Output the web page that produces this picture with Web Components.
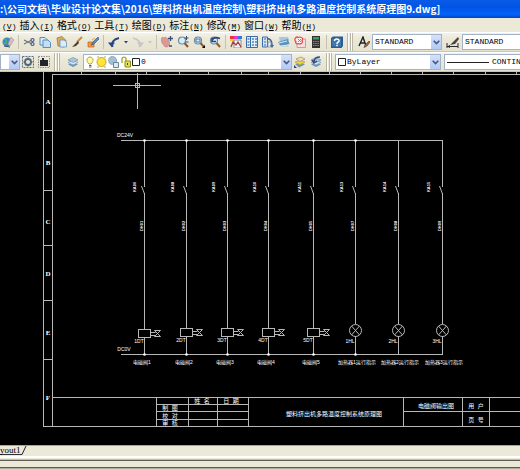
<!DOCTYPE html>
<html lang="zh-CN">
<head>
  <meta charset="UTF-8">
  <meta name="viewport" content="width=device-width, initial-scale=1.0">
  <title>原理图9.dwg</title>
  <style>
    html, body {
      height: 100%;
      margin: 0;
    }
    body {
      overflow: hidden;
      background: #ece9d8;
      font-family: "Liberation Mono", "Noto Sans CJK SC", monospace;
    }
  </style>
</head>
<body>
  <cad-window>
    <cad-title slot="title">:\公司文档\毕业设计论文集\2016\塑料挤出机温度控制\塑料挤出机多路温度控制系统原理图9.dwg]</cad-title>
    <cad-menu slot="menu"></cad-menu>

    <cad-toolbar slot="tools">
      <cad-tool icon="globe" label="发布"></cad-tool>
      <cad-sep></cad-sep>
      <cad-tool icon="cut" label="剪切"></cad-tool>
      <cad-tool icon="copy" label="复制"></cad-tool>
      <cad-tool icon="paste" label="粘贴"></cad-tool>
      <cad-tool icon="brush" label="特性匹配"></cad-tool>
      <cad-tool icon="block" label="块编辑器"></cad-tool>
      <cad-sep></cad-sep>
      <cad-tool icon="undo" label="放弃"></cad-tool>
      <cad-tool icon="caret" label="放弃列表" narrow></cad-tool>
      <cad-tool icon="redo" label="重做"></cad-tool>
      <cad-tool icon="caretOff" label="重做列表" narrow></cad-tool>
      <cad-sep></cad-sep>
      <cad-tool icon="pan" label="实时平移"></cad-tool>
      <cad-tool icon="zoom" label="实时缩放"></cad-tool>
      <cad-tool icon="zoomWin" label="窗口缩放"></cad-tool>
      <cad-tool icon="zoomPrev" label="缩放上一个"></cad-tool>
      <cad-sep></cad-sep>
      <cad-tool icon="props" label="特性"></cad-tool>
      <cad-tool icon="center" label="设计中心"></cad-tool>
      <cad-tool icon="palette" label="工具选项板"></cad-tool>
      <cad-tool icon="sheets" label="图纸集管理器"></cad-tool>
      <cad-tool icon="markup" label="标记集管理器"></cad-tool>
      <cad-tool icon="calc" label="快速计算器"></cad-tool>
      <cad-sep></cad-sep>
      <cad-tool icon="help" label="帮助"></cad-tool>
      <cad-grip></cad-grip>
      <cad-tool icon="textStyle" label="文字样式"></cad-tool>
      <cad-combo label="文字样式" value="STANDARD" style="width: 70px"></cad-combo>
      <cad-tool icon="dimStyle" label="标注样式" wide></cad-tool>
      <cad-combo label="标注样式" value="STANDARD" style="width: 70px"></cad-combo>
    </cad-toolbar>

    <cad-toolbar slot="tools">
      <cad-combo label="工作空间" value="" style="width: 20px"></cad-combo>
      <cad-tool icon="gear" label="工作空间设置"></cad-tool>
      <cad-tool icon="myspace" label="我的工作空间"></cad-tool>
      <cad-grip></cad-grip>
      <cad-tool icon="layers" label="图层特性管理器" wide></cad-tool>
      <cad-combo label="图层" value="0" icons="bulb sun vpSun lock swatch" style="width: 209px"></cad-combo>
      <cad-tool icon="layerCur" label="置为当前图层"></cad-tool>
      <cad-tool icon="layerPrev" label="上一个图层"></cad-tool>
      <cad-grip></cad-grip>
      <cad-combo label="颜色" value="ByLayer" icons="swatch" style="width: 106px"></cad-combo>
      <cad-combo label="线型" value="CONTINUOUS" icons="rule" style="width: 120px; margin-left: 3px"></cad-combo>
    </cad-toolbar>

    <cad-drawing></cad-drawing>
    <cad-tabs slot="bottom">yout1</cad-tabs>
  </cad-window>

  <script>
    (function() {
      const svg = (body, w = 12, h = 12) =>
        `<svg width="${w}" height="${h}" viewBox="0 0 ${w} ${h}" fill="none" aria-hidden="true">${body}</svg>`;

      const stack = `<path d="M1 8.500l5-2 5 2-5 2.500z" fill="#6f95b8"/><path d="M1 6.500l5-2.500 5 2.500-5 2.500z" fill="#dbe9f4" stroke="#6f95b8" stroke-width=".7"/><path d="M1 4l5-2.500L11 4 6 6.500z" fill="#a9c6df" stroke="#6f95b8" stroke-width=".7"/>`;
      const lens = `<circle cx="5" cy="4.500" r="3.500" fill="#d8ecf6" stroke="#6f8ba4" stroke-width="1.200"/><path d="M7.500 7l3.500 4" stroke="#8a5a35" stroke-width="2"/>`;

      const icons = {
        globe: svg(`<circle cx="5" cy="6" r="4.500" fill="#3f86c4"/><path d="M2 3c2 0 3 2 2 4l-2 1" stroke="#54b06a" stroke-width="1.500"/><path d="M6 8l3-7 3 3-4 6z" fill="#e9b7b0" stroke="#8c9fae" stroke-width=".6"/><path d="M2 10l6 1" stroke="#31506d"/>`),
        cut: svg(`<path d="M1 4l7 3.500M1 8l7-3.500" stroke="#69707c" stroke-width="1.100"/><circle cx="9.500" cy="4" r="1.500" stroke="#3d5a8c" stroke-width="1.200"/><circle cx="9.500" cy="8" r="1.500" stroke="#3d5a8c" stroke-width="1.200"/>`),
        copy: svg(`<path d="M1 1.500h5l2 2V9H1z" fill="#d8ebf8" stroke="#5b8dbc"/><path d="M4 4h5l2.500 2.500V11.500H4z" fill="#c5dff2" stroke="#5b8dbc"/>`),
        paste: svg(`<path d="M2 2l5-1.500 4 4-2 6.500-6-1z" fill="#d9ad5b" stroke="#9a7a3f" stroke-width=".8"/><path d="M5 4h4l2.500 2v5H5z" fill="#dcebf6" stroke="#6b93b8" stroke-width=".8"/>`),
        brush: svg(`<path d="M11 1L6 6" stroke="#c98a4a" stroke-width="2"/><path d="M7 5L4 8l-3 3 4-1 3-3z" fill="#4d3a2c"/>`),
        block: svg(`<path d="M1 6h6v5H1z" fill="#f09a3e" stroke="#c0612a" stroke-width=".7"/><path d="M11 1L6 6 4 9l3-1 5-5z" fill="#5f87c0" stroke="#2e4c80" stroke-width=".6"/><path d="M5 4l3-2" stroke="#e2c257" stroke-width="1.500"/>`),
        undo: svg(`<path d="M4.500 11C3 7 5 3.500 11 2" stroke="#27457e" stroke-width="2"/><path d="M0 6.500h7L3.500 11z" fill="#27457e"/>`),
        redo: svg(`<path d="M7.500 11C9 7 7 3.500 1 2" stroke="#c4c6c8" stroke-width="1.800"/><path d="M12 6.500H5L8.500 11z" fill="#c4c6c8"/>`),
        caret: svg(`<path d="M1 5h4L3 7.500z" fill="#27457e"/>`, 6),
        caretOff: svg(`<path d="M1 5h4L3 7.500z" fill="#c4c6c8"/>`, 6),
        pan: svg(`<path d="M0 3l1.500-2 1.500 1 1.500-1L7 3l1.500 3v3l-2 2H4L1 7z" fill="#d99a92" stroke="#b77970" stroke-width=".5"/><path d="M9.500 0v5M7 2.500h5M8 10h3" stroke="#33507f" stroke-width="1.300"/>`),
        zoom: svg(`${lens}<path d="M9.500 0v4M7.500 2h4M8.500 6h3" stroke="#33507f"/>`),
        zoomWin: svg(`${lens}<path d="M3 3h4v3H3z" stroke="#4a78aa"/><path d="M12 9v3H9z" fill="#000"/>`),
        zoomPrev: svg(`${lens}<path d="M3 4.500C4 2 7 1 11 2.500M3 2v3.500h4" stroke="#27457e" stroke-width="1.600"/>`),
        props: svg(`<path d="M0 0h4v3H0z" fill="#e33"/><path d="M4 0h4v3H4z" fill="#e3c"/><path d="M8 0h4v3H8z" fill="#37d"/><path d="M0 3h4v2H0z" fill="#fc3"/><path d="M4 4h7v8H4z" fill="#f5f5f5" stroke="#8a8f99"/><path d="M1 11l2-5 3 3 2-3 3 5" stroke="#a33f3f" stroke-width="1.300"/>`),
        center: svg(`<path d="M.5.5h11v11H.5z" fill="#e2effa" stroke="#3c6ba5"/><path d="M4.500 1v10" stroke="#3c6ba5"/><path d="M1.500 3h2M1.500 6h2M1.500 9h2M6 3h2M9 3h2M6 6h2M9 6h2M6 9h2M9 9h2" stroke="#4d87c0" stroke-width="1.500"/>`),
        palette: svg(`<path d="M.5 1h5v10h-5z" fill="#d2e4f4" stroke="#3c6ba5"/><path d="M2 3h2M2 6h2M2 9h2" stroke="#3c6ba5"/><path d="M5 2.500c4 0 5 3 5 7" stroke="#46618c" stroke-width="1.600"/><path d="M6 6h3v5H6z" fill="#e9eff5" stroke="#7d94ad" stroke-width=".8"/><path d="M8 9h4l-2 3z" fill="#46618c"/>`),
        sheets: svg(`<path d="M1 1h9l1 3-9 2z" fill="#9fc9e4"/><path d="M0 6l10-3 1.500 5L3 11z" fill="#5c93b9"/><path d="M1 7l8-2M2 10l9-1v2H2z" stroke="#dcebf3" fill="#b3b9ae"/>`),
        markup: svg(`<path d="M3 3h8.500v8.500H3z" fill="#f5dedd" stroke="#b7a2a4"/><path d="M2 1.500c1-1 2 0 2 0s2-1 3 0c2 0 2 2 1 3 1 1 0 3-1 3-1 1-2 0-3 0-1 1-3 0-2-2-2-1-1-3 0-4z" fill="#fbeeee" stroke="#e04747" stroke-width="1.200"/><path d="M4 3l3 3M7 3L4 6" stroke="#e04747" stroke-width=".8"/>`),
        calc: svg(`<path d="M2 0h8v12H2z" fill="#34302f"/><path d="M3 1h6v2.500H3z" fill="#3f9a68"/><path d="M3 5.500h6M3 7.500h6M3 9.500h6" stroke="#d1695d" stroke-dasharray="1.500 .7"/>`),
        help: svg(`<path d="M0 2l2-1.500h10V10l-1.500 2H0z" fill="#2c5c90"/><path d="M1 2.500h9v8H1z" fill="#4077ad"/><path d="M3.500 5c0-3 5-2.500 4.500 0-.3 1.300-2 1-2 3M6 8.800v1.500" stroke="#fff" stroke-width="1.500"/>`),
        textStyle: svg(`<path d="M1 10L5 1l3 9M2.500 7h4" stroke="#1f2228" stroke-width="1.400"/><path d="M11 5L7 9l-1 2.500L9 10l3-4z" fill="#a66a3a" stroke="#2d3a55" stroke-width=".6"/>`),
        dimStyle: svg(`<path d="M1 7v5M12 7v5M1 10.500h11" stroke="#2b2b2b"/><path d="M1 10.500l3-1.500v3z" fill="#222"/><path d="M12 1L8 5 4 9l5-1 4-5z" fill="#4a4540"/>`, 13),
        gear: svg(`<path d="M.5.5h11v11H.5z" stroke="#5d7184" stroke-dasharray="2 1"/><circle cx="6" cy="6" r="3" stroke="#52677a" stroke-width="1.800"/><path d="M6 1.500v2M6 8.500v2M1.500 6h2M8.500 6h2M3 3l1 1M8 8l1 1M9 3L8 4M4 8L3 9" stroke="#52677a" stroke-width="1.300"/>`),
        myspace: svg(`<path d="M.5.5h11v11H.5z" stroke="#8b8d86" stroke-dasharray="1.500 1"/><path d="M2 4h2V2h2v2h4v6H2z" fill="#22252a"/>`),
        layers: svg(stack),
        layerCur: svg(`<path d="M1 8l6-1.500 4 2-6 3z" fill="#6f95b8"/><path d="M1 6l5-2 5 2-5 3z" fill="#f2cf45" stroke="#b39224" stroke-width=".6"/><path d="M2 3l5-2 4 2-5 2.500z" fill="#f7e38a" stroke="#7d8fa5" stroke-width=".7"/><path d="M0 9v3h3z" fill="#27457e"/>`),
        layerPrev: svg(`${stack}<path d="M4 6c0-4 3-5 6-5M2 4l2 3 3-2" stroke="#33507f" stroke-width="1.500"/>`),
        bulb: svg(`<path d="M3 8C-.5 4.500 1 1 4 1s4.500 3.500 1 7z" fill="#fff9a5" stroke="#b9a136"/><path d="M3 9.500h2.500M3 11h2.500" stroke="#55606e"/>`, 9),
        sun: svg(`<path d="M1 1h2M8 1h2M1 11h2M8 11h2" stroke="#c7a62c"/><circle cx="5.500" cy="6" r="4.500" fill="#ffe43b" stroke="#c7a62c"/>`, 11),
        vpSun: svg(`<circle cx="4.500" cy="4.500" r="4" fill="#a5bfd0" stroke="#7b96aa" stroke-dasharray="1.500 .8"/><path d="M5.500 6.500h5v5h-5z" fill="#dcebf4" stroke="#6485a0"/>`, 12),
        lock: svg(`<path d="M1 7V3c0-2.500 4-2.500 4 0v2" stroke="#a9aa22" stroke-width="1.400"/><path d="M4 5h5.500v6H4z" fill="#dfe04a" stroke="#8c8d1c"/><path d="M6.500 7v2" stroke="#444"/>`, 10),
        swatch: svg(`<path d="M.5 2.500h7v7h-7z" fill="#fff" stroke="#222"/>`, 8),
        rule: svg(`<path d="M0 6.500h42" stroke="#222"/>`, 44)
      };

      // Small helper: shadow root from one html string
      function define(name, html, setup) {
        const $template = document.createElement('template');
        $template.innerHTML = html;
        customElements.define(name, class extends HTMLElement {
          constructor() {
            super();
            this.attachShadow({mode: 'open'});
            this.shadowRoot.appendChild($template.content.cloneNode(true));
          }
          connectedCallback() {
            if (setup) setup(this, this.shadowRoot);
          }
        });
      }

      define('cad-window', `
        <style>
          :host {
            display: flex;
            flex-direction: column;
            height: 100vh;
            overflow: hidden;
          }
          main {
            flex: 1;
            min-height: 0;
            display: flex;
          }
        </style>
        <slot name="title"></slot>
        <slot name="menu"></slot>
        <slot name="tools"></slot>
        <main><slot></slot></main>
        <slot name="bottom"></slot>
      `);

      define('cad-title', `
        <style>
          :host {
            display: block;
            flex: none;
            background: linear-gradient(#0a5ce8, #0054e3 40%, #0562fa 80%, #0144c4);
          }
          h1 {
            margin: 0;
            font: bold 10px/18px "Noto Sans CJK SC", sans-serif;
            color: #fff;
            white-space: nowrap;
          }
        </style>
        <h1><slot></slot></h1>
      `);

      define('cad-menu', `
        <style>
          :host {
            display: block;
            flex: none;
            background: #ece9d8;
          }
          nav {
            display: flex;
            gap: 3px;
            height: 14px;
            padding-left: 2px;
          }
          button {
            padding: 0;
            border: 0;
            background: none;
            color: #000;
            font: 10px/14px "Noto Sans CJK SC", sans-serif;
            white-space: nowrap;
          }
          span {
            font: 8px "Liberation Mono", monospace;
          }
        </style>
        <nav></nav>
      `, ($el, root) => {
        const items = [['', 'V'], ['插入', 'I'], ['格式', 'O'], ['工具', 'T'], ['绘图', 'D'],
          ['标注', 'N'], ['修改', 'M'], ['窗口', 'W'], ['帮助', 'H']];
        root.querySelector('nav').innerHTML = items
          .map(([text, key]) => `<button>${text}<span>(<u>${key}</u>)</span></button>`).join('');
      });

      define('cad-toolbar', `
        <style>
          :host {
            display: flex;
            flex: none;
            align-items: center;
            box-sizing: border-box;
            height: 20px;
            overflow: hidden;
            background: linear-gradient(#f4f2e8, #ece9d8 30%, #e6e2d0);
            border-top: 1px solid #fff;
            border-bottom: 1px solid #c9c5b2;
          }
        </style>
        <slot></slot>
      `);

      define('cad-tool', `
        <style>
          :host {
            display: block;
            flex: none;
            width: 16px;
          }
          :host([narrow]) {
            width: 8px;
          }
          :host([wide]) {
            width: 20px;
          }
          button {
            display: flex;
            align-items: center;
            justify-content: center;
            width: 100%;
            height: 16px;
            padding: 0;
            border: 0;
            background: none;
          }
          svg {
            flex: none;
          }
        </style>
        <button></button>
      `, ($el, root) => {
        const $button = root.querySelector('button');
        $button.setAttribute('aria-label', $el.getAttribute('label'));
        $button.innerHTML = icons[$el.getAttribute('icon')];
      });

      define('cad-sep', `
        <style>
          :host {
            display: block;
            flex: none;
            width: 1px;
            height: 14px;
            margin: 0 2px;
            background: #c5c2b2;
          }
        </style>
      `);

      define('cad-grip', `
        <style>
          :host {
            display: block;
            flex: none;
            box-sizing: border-box;
            width: 6px;
            height: 18px;
            margin: 0 3px 0 2px;
            border: solid #bab6a4;
            border-width: 0 1px;
            background: linear-gradient(90deg, #fff 1px, #ece9d8 1px 2px, #bab6a4 2px 3px, #fff 3px);
          }
        </style>
      `);

      define('cad-combo', `
        <style>
          :host {
            display: flex;
            flex: none;
            position: relative;
            align-items: center;
            box-sizing: border-box;
            height: 16px;
            padding-left: 2px;
            gap: 1px;
            border: 1px solid #a3b3c6;
            background: #fff;
          }
          svg {
            flex: none;
          }
          select {
            flex: 1;
            min-width: 0;
            height: 14px;
            padding: 0;
            border: 0;
            appearance: none;
            background: none;
            color: #000;
            font: 8px/14px "Liberation Mono", monospace;
          }
          /* arrow lies over the right end of the select */
          .arrow {
            display: flex;
            position: absolute;
            top: 0;
            right: 0;
            bottom: 0;
            width: 10px;
            align-items: center;
            justify-content: center;
            pointer-events: none;
            background: linear-gradient(#d5e1fc, #b4c9f5);
          }
        </style>
        <select><option></option></select>
        <span class="arrow"><svg width="7" height="5" viewBox="0 0 7 5" fill="none"><path d="M.7.7l2.800 2.800L6.300.7" stroke="#43597d" stroke-width="1.600"/></svg></span>
      `, ($el, root) => {
        const $select = root.querySelector('select');
        $select.setAttribute('aria-label', $el.getAttribute('label'));
        $select.options[0].textContent = $el.getAttribute('value');
        const names = ($el.getAttribute('icons') || '').split(' ').filter(Boolean);
        $select.insertAdjacentHTML('beforebegin', names.map((n) => icons[n]).join(''));
      });

      define('cad-drawing', `
        <style>
          :host {
            display: block;
            flex: 1;
            min-width: 0;
            background: #000;
          }
          svg {
            display: block;
            width: 100%;
            height: 100%;
          }
          line, path, rect, circle {
            fill: none;
            stroke: #b8b8b8;
          }
          .dot {
            fill: #fff;
            stroke: none;
          }
          text {
            fill: #fff;
            font: 5px "Liberation Sans", "Noto Sans CJK SC", sans-serif;
            text-anchor: middle;
            white-space: pre;
          }
          .zone {
            font: bold 7px "Liberation Serif", serif;
          }
          .wire {
            font-size: 4px;
            font-weight: bold;
          }
          .block {
            font-size: 6px;
          }
        </style>
        <svg></svg>
      `, ($el, root) => {
        const line = (x1, y1, x2, y2) => `<line x1="${x1}" y1="${y1}" x2="${x2}" y2="${y2}"/>`;
        const text = (x, y, s, cls = '') => `<text class="${cls}" x="${x}" y="${y}">${s}</text>`;
        const turned = (x, y, s) => `<text class="wire" transform="translate(${x} ${y}) rotate(-90)">${s}</text>`;
        let out = '';

        // sheet frame with its zone marks
        out += line(43.5, 0, 43.5, 355) + line(52.5, 2, 52.5, 355);
        out += line(52, 2.5, '100%', 2.5) + line(43, 354.5, '100%', 354.5);
        [81, 115, 146, 179, 208, 241, 268, 300, 329, 360, 391, 422, 453, 485, 516]
          .forEach((x) => out += line(x + .5, 0, x + .5, 3));
        [58, 118, 173, 228, 287].forEach((y) => out += line(43, y + .5, 53, y + .5));
        [['A', 31], ['B', 92], ['C', 151], ['D', 203], ['E', 262], ['F', 327]]
          .forEach(([s, y]) => out += text(48, y + 1, s, 'zone'));

        // supply rails
        out += line(121, 68.5, 443, 68.5) + line(121, 282.5, 443, 282.5);
        out += text(125, 65, 'DC24V') + text(124, 279, 'DC0V');

        // branches: x, relay, wire number, load label
        const branches = [
          [144, 'KA06', 'DH01', '1DT'],
          [186, 'KA08', 'DH02', '2DT'],
          [227, 'KA09', 'DH03', '3DT'],
          [268, 'KA10', 'DH04', '4DT'],
          [313, 'KA11', 'DH05', '5DT'],
          [355, 'KA13', 'DH07', '1HL'],
          [398, 'KA14', 'DH08', '2HL'],
          [442, 'KA15', 'DH09', '3HL']
        ];
        branches.forEach(([bx, relay, wire, load], i) => {
          const x = bx + .5;
          const lamp = i > 4;
          const y = i === 0 ? 257 : 256;
          out += line(x, 68, x, 115) + line(x - 3, 114, x, 122);
          out += line(x, 121, x, lamp ? 252 : y) + line(x, lamp ? 264 : y + 8, x, 283);
          if (i < 6) {
            out += `<circle class="dot" cx="${x}" cy="68.5" r="1.3"/>`;
            out += `<circle class="dot" cx="${x}" cy="282.5" r="1.3"/>`;
          }
          out += turned(bx - (i ? 12 : 8), 115, relay) + turned(bx - 1, 154, wire);
          if (lamp) {
            out += `<circle cx="${x}" cy="258.5" r="6"/>`;
            out += `<path d="M${x - 4} 254l8 9M${x + 4} 254l-8 9"/>`;
            out += text(bx - 5, 271, load);
            out += text(bx + 2, 292, `加热器${i - 4}运行指示`);
          } else {
            out += `<rect x="${x - 6}" y="${y + .5}" width="12" height="8"/>`;
            out += `<path d="M${x + 6} ${y + 3.5}h5M${x + 6} ${y + 6.5}h5M${x + 10} ${y + 1.5}h6l-6 6h6z"/>`;
            out += text(bx - 5, y + 14, load);
            out += text(bx - 2, 292, `电磁阀${i + 1}`);
          }
        });

        // title block
        out += line(52, 325.5, '100%', 325.5);
        [156, 188, 217, 248, 403, 462, 489].forEach((x) => out += line(x + .5, 325, x + .5, 354));
        [332, 339, 347].forEach((y) => out += line(156, y + .5, 249, y + .5));
        out += line(403, 339.5, '100%', 339.5);
        out += text(202, 331, '姓  名', 'block') + text(231, 331, '日  期', 'block');
        out += text(170, 338, '制  图', 'block') + text(170, 346, '校  对', 'block') + text(170, 353, '审  核', 'block');
        out += text(334, 344, '塑料挤出机多路温度控制系统原理图', 'block');
        out += text(436, 336, '电磁阀输出图', 'block');
        out += text(476, 336, '用  户', 'block') + text(476, 350, '页  号', 'block');

        // crosshair cursor
        out += line(113, 13.5, 161, 13.5) + line(137.5, 1, 137.5, 37);
        out += '<rect x="135.5" y="11.5" width="4" height="4"/>';

        root.querySelector('svg').innerHTML = out;
      });

      define('cad-tabs', `
        <style>
          :host {
            display: block;
            flex: none;
            background: #ece9d8;
            border-top: 1px solid #aaa799;
          }
          nav {
            display: flex;
            height: 10px;
            border-bottom: 2px solid #fff;
          }
          button {
            height: 9px;
            padding: 0;
            border: 0;
            border-bottom: 1px solid #333;
            background: none;
            color: #000;
            font: 9px/8px "Liberation Serif", serif;
          }
          footer {
            height: 6px;
            margin-top: 2px;
            border: solid #5e5c53;
            border-width: 1px 0;
            box-shadow: 0 -1px #c2bfae, 0 1px #b0ad9f;
            margin-bottom: 1px;
          }
        </style>
        <nav><button><slot></slot></button><svg width="6" height="9" viewBox="0 0 6 9"><path d="M0 8.500h1L5 0" fill="none" stroke="#222"/></svg></nav>
        <footer></footer>
      `);
    })()
  </script>
</body>
</html>
